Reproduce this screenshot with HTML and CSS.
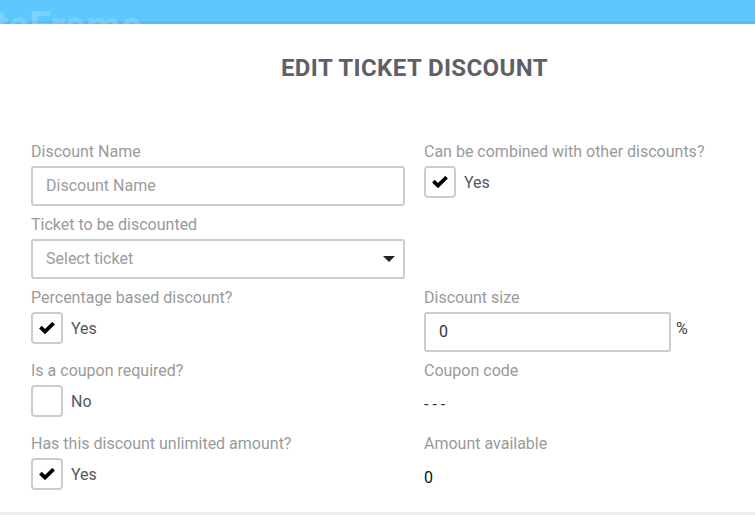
FILE: index.html
```html
<!DOCTYPE html>
<html lang="en">
<head>
<meta charset="utf-8">
<title>Edit ticket discount</title>
<link rel="stylesheet" href="styles.css">
</head>
<body>
<header class="topbar"><span class="brand">tsFrame</span></header>
<main class="modal">
  <h1 class="title">EDIT TICKET DISCOUNT</h1>
  <div class="form">
    <div class="field">
      <div class="label">Discount Name</div>
      <div class="control">
        <div class="input placeholder">Discount Name</div>
      </div>
    </div>
    <div class="field">
      <div class="label">Can be combined with other discounts?</div>
      <div class="control">
        <div class="check-row">
          <span class="box"><svg viewBox="0 0 16 12" width="16" height="12"><path d="M1.4 5.2 L6 9.6 L14.6 1.2" fill="none" stroke="#000" stroke-width="3.8"/></svg></span>
          <span class="check-text">Yes</span>
        </div>
      </div>
    </div>
    <div class="field">
      <div class="label">Ticket to be discounted</div>
      <div class="control">
        <div class="input select placeholder">Select ticket
          <svg class="arrow" viewBox="0 0 12 6" width="12" height="6"><polygon points="0,0 12,0 6,6" fill="#222"/></svg>
        </div>
      </div>
    </div>
    <div class="field"></div>
    <div class="field">
      <div class="label">Percentage based discount?</div>
      <div class="control">
        <div class="check-row">
          <span class="box"><svg viewBox="0 0 16 12" width="16" height="12"><path d="M1.4 5.2 L6 9.6 L14.6 1.2" fill="none" stroke="#000" stroke-width="3.8"/></svg></span>
          <span class="check-text">Yes</span>
        </div>
      </div>
    </div>
    <div class="field">
      <div class="label">Discount size</div>
      <div class="control size-row">
        <div class="input short value">0</div>
        <span class="unit">%</span>
      </div>
    </div>
    <div class="field">
      <div class="label">Is a coupon required?</div>
      <div class="control">
        <div class="check-row">
          <span class="box"></span>
          <span class="check-text">No</span>
        </div>
      </div>
    </div>
    <div class="field">
      <div class="label">Coupon code</div>
      <div class="control static">- - -</div>
    </div>
    <div class="field">
      <div class="label">Has this discount unlimited amount?</div>
      <div class="control">
        <div class="check-row">
          <span class="box"><svg viewBox="0 0 16 12" width="16" height="12"><path d="M1.4 5.2 L6 9.6 L14.6 1.2" fill="none" stroke="#000" stroke-width="3.8"/></svg></span>
          <span class="check-text">Yes</span>
        </div>
      </div>
    </div>
    <div class="field">
      <div class="label">Amount available</div>
      <div class="control static dark">0</div>
    </div>
  </div>
</main>
</body>
</html>
```
FILE: styles.css
```css
html, body {
  margin: 0;
  padding: 0;
}
body {
  width: 755px;
  height: 515px;
  overflow: hidden;
  background: #efefef;
  font-family: Roboto, "Liberation Sans", Arial, sans-serif;
}
.topbar {
  height: 24px;
  overflow: hidden;
  background: #5dc8fe;
  box-shadow: inset 0 -3px 0 rgba(0, 0, 0, 0.06);
}
.brand {
  display: block;
  padding-top: 7px;
  text-indent: -5px;
  font-size: 40px;
  line-height: 40px;
  font-weight: 700;
  color: rgba(255, 255, 255, 0.2);
  white-space: nowrap;
}
.modal {
  width: 829px;
  height: 488px;
  box-sizing: border-box;
  padding: 30px 31px 0;
  background: #fff;
}
.title {
  margin: 0;
  text-align: center;
  font-size: 24px;
  line-height: 28px;
  letter-spacing: 0.4px;
  font-weight: 700;
  color: #5f5f6a;
}
.form {
  margin-top: 60px;
  display: grid;
  grid-template-columns: 374px 374px;
  column-gap: 19px;
  row-gap: 9px;
}
.label {
  font-size: 16px;
  line-height: 20px;
  color: #9a9a9a;
  margin-bottom: 4px;
  white-space: nowrap;
}
.control {
  height: 40px;
}
.input {
  box-sizing: border-box;
  height: 40px;
  border: 2px solid #cbcccf;
  border-radius: 3px;
  padding: 0 13px;
  font-size: 16px;
  line-height: 36px;
  position: relative;
}
.placeholder {
  color: #9c9c9c;
}
.value {
  color: #333;
}
.select .arrow {
  position: absolute;
  right: 8px;
  top: 15px;
}
.short {
  width: 247px;
}
.size-row {
  display: flex;
  align-items: flex-start;
}
.unit {
  margin-left: 5px;
  margin-top: 7px;
  font-size: 16px;
  line-height: 20px;
  color: #444;
}
.check-row {
  display: flex;
  align-items: center;
  height: 32px;
}
.box {
  box-sizing: border-box;
  width: 32px;
  height: 32px;
  border: 2px solid #cbcccf;
  border-radius: 4px;
  display: flex;
  align-items: center;
  justify-content: center;
}
.check-text {
  margin-left: 8px;
  font-size: 16px;
  color: #55555f;
}
.static {
  font-size: 16px;
  line-height: 40px;
  color: #333;
}
.dark {
  color: #111;
}
```
